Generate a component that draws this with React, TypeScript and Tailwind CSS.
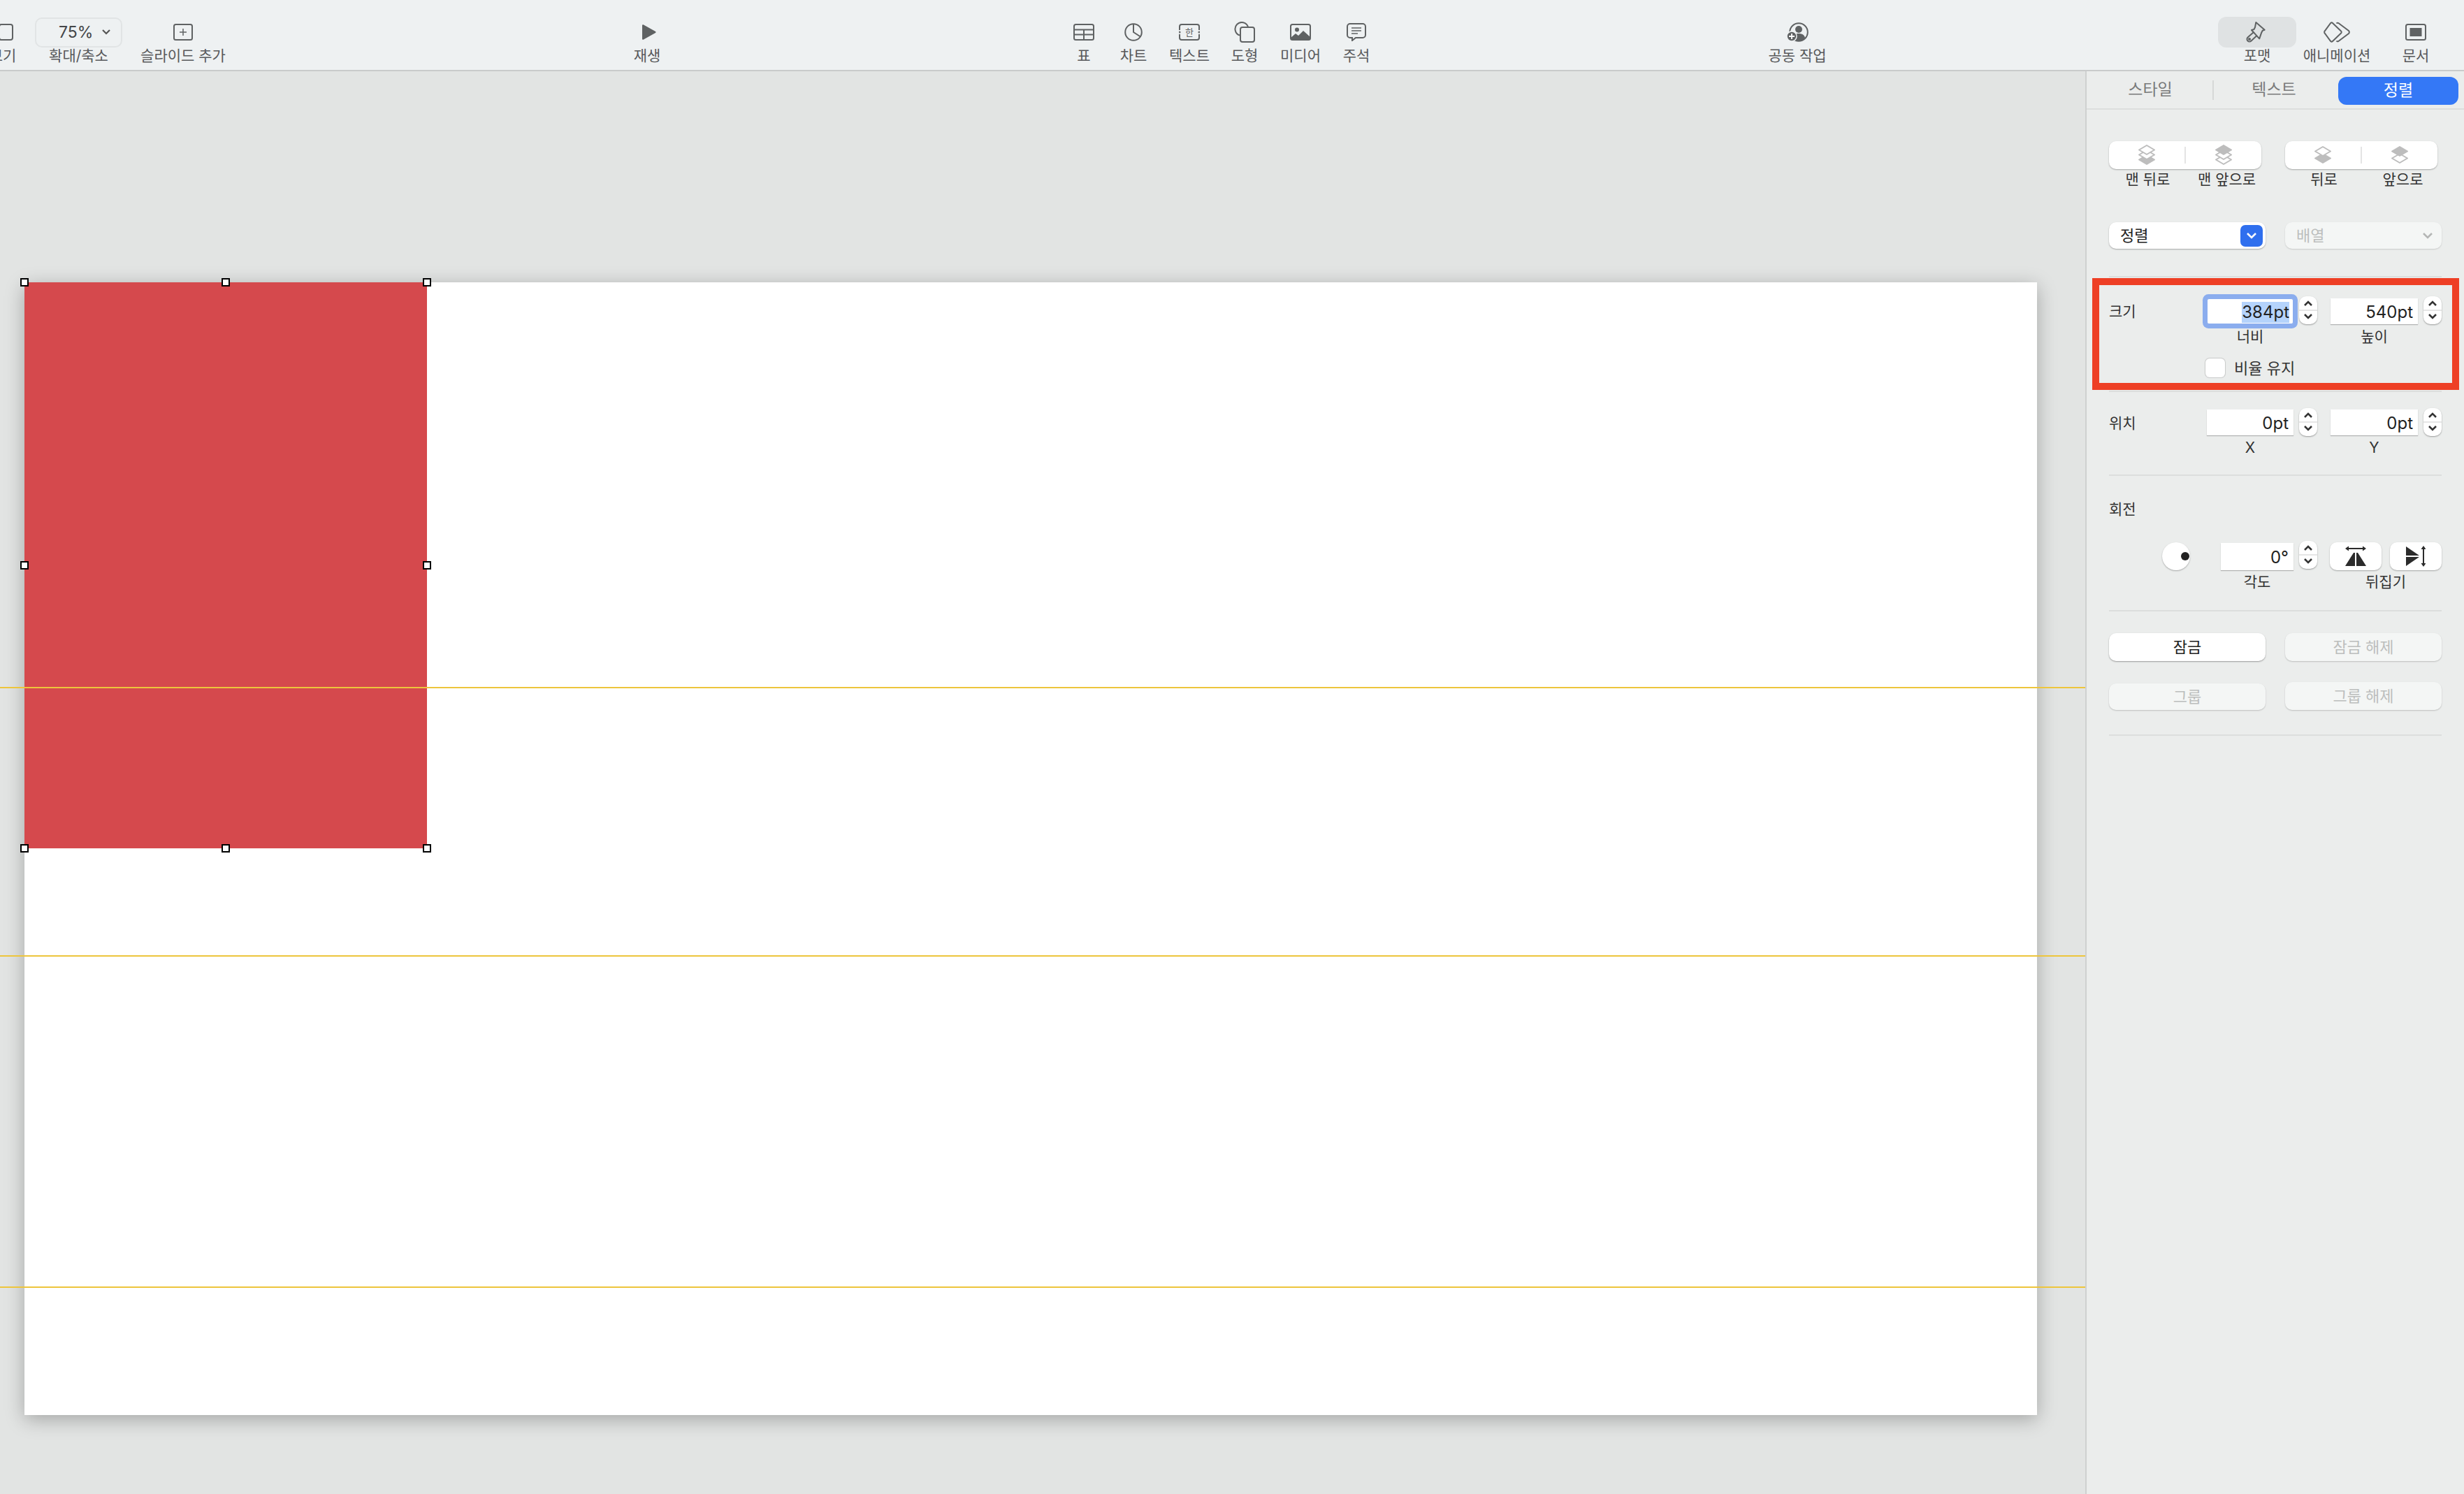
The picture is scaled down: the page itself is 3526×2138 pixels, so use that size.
import React from 'react'

const iconStroke = '#5f6263'

function ToolItem({
  label,
  className,
  active,
  children,
}: {
  label: string
  className: string
  active?: boolean
  children: React.ReactNode
}) {
  return (
    <div className={`flex shrink-0 flex-col items-center ${className}`}>
      <div className={`flex h-[44px] w-full items-center justify-center rounded-[12px] ${active ? 'bg-[#dfe2e3]' : ''}`}>
        {children}
      </div>
      <span className="whitespace-nowrap text-[21px] leading-[24px] text-[#58595b]">{label}</span>
    </div>
  )
}

function Svg({ w, h, children }: { w: number; h: number; children: React.ReactNode }) {
  return (
    <svg width={w} height={h} viewBox={`0 0 ${w} ${h}`} fill="none" stroke={iconStroke} strokeWidth={2}>
      {children}
    </svg>
  )
}

function Toolbar() {
  return (
    <div className="flex h-[102px] shrink-0 items-start border-b-2 border-[#c9cbcb] bg-[#eef1f2] pt-[24px]">
      <ToolItem label="보기" className="ml-[-26px] w-[60px]">
        <Svg w={30} h={24}>
          <rect x="10" y="1" width="19" height="22" rx="3" />
        </Svg>
      </ToolItem>
      <ToolItem label="확대/축소" className="ml-[16px] w-[125px]">
        <div className="flex h-[43px] w-full items-center rounded-[10px] border-2 border-[#e1e4e5] pl-[32px] pr-[12px]">
          <span className="text-[23px] leading-none text-[#444648]">75%</span>
          <svg className="ml-[12px]" width="14" height="10" viewBox="0 0 14 10" fill="none" stroke="#555" strokeWidth="2.2">
            <path d="M2 2l5 5 5-5" />
          </svg>
        </div>
      </ToolItem>
      <ToolItem label="슬라이드 추가" className="ml-[22px] w-[130px]">
        <Svg w={28} h={24}>
          <rect x="1" y="1" width="26" height="22" rx="2.5" />
          <path d="M14 7v10M9 12h10" strokeWidth={1.5} />
        </Svg>
      </ToolItem>
      <ToolItem label="재생" className="ml-[569px] w-[60px]">
        <svg className="ml-[6px]" width="20" height="22" viewBox="0 0 20 22" fill={iconStroke}>
          <path d="M0 1.5C0 .5 1 0 2 .6l17 9.4c.8.5.8 1.6 0 2L2 21.4c-1 .6-2 0-2-1z" />
        </svg>
      </ToolItem>
      <ToolItem label="표" className="ml-[565px] w-[60px]">
        <Svg w={30} h={24}>
          <rect x="1" y="1" width="28" height="22" rx="2.5" />
          <path d="M1 8.5h28M1 15.5h28M15 8.5v14.5" />
        </Svg>
      </ToolItem>
      <ToolItem label="차트" className="ml-[11px] w-[60px]">
        <Svg w={26} h={26}>
          <circle cx="13" cy="13" r="11.8" />
          <path d="M13 1.5V13l10 6.5" />
        </Svg>
      </ToolItem>
      <ToolItem label="텍스트" className="ml-[15px] w-[70px]">
        <div className="relative flex h-[24px] w-[30px] items-center justify-center">
          <svg className="absolute inset-0" width="30" height="24" viewBox="0 0 30 24" fill="none" stroke={iconStroke} strokeWidth="2">
            <path d="M1 9V4a3 3 0 0 1 3-3h22a3 3 0 0 1 3 3v5M1 15v5a3 3 0 0 0 3 3h22a3 3 0 0 0 3-3v-5" />
            <circle cx="1" cy="12" r=".6" />
            <circle cx="29" cy="12" r=".6" />
          </svg>
          <span className="text-[13px] leading-none text-[#5f6263]">한</span>
        </div>
      </ToolItem>
      <ToolItem label="도형" className="ml-[14px] w-[60px]">
        <Svg w={30} h={30}>
          <path d="M8 19.5A9.5 9.5 0 1 1 20 7.5" />
          <rect x="9" y="8" width="20" height="21" rx="3" />
        </Svg>
      </ToolItem>
      <ToolItem label="미디어" className="ml-[20px] w-[60px]">
        <Svg w={30} h={24}>
          <rect x="1" y="1" width="28" height="22" rx="2.5" />
          <circle cx="10" cy="8.5" r="3" fill={iconStroke} stroke="none" />
          <path d="M1 20l7-6 4 3 7-7 10 9v2a2 2 0 0 1-2 2H3a2 2 0 0 1-2-2z" fill={iconStroke} stroke="none" />
        </Svg>
      </ToolItem>
      <ToolItem label="주석" className="ml-[20px] w-[60px]">
        <Svg w={28} h={26}>
          <path d="M5 1h18a4 4 0 0 1 4 4v12a4 4 0 0 1-4 4H13l-5 4v-4H5a4 4 0 0 1-4-4V5a4 4 0 0 1 4-4z" />
          <path d="M7 7h14M7 11h14M7 15h9" strokeWidth={1.5} />
        </Svg>
      </ToolItem>
      <ToolItem label="공동 작업" className="ml-[551px] w-[100px]">
        <svg width="32" height="28" viewBox="0 0 32 28" fill="none" stroke={iconStroke} strokeWidth="2">
          <circle cx="18" cy="14" r="12.8" />
          <circle cx="18" cy="10" r="5" fill={iconStroke} stroke="none" />
          <path d="M9 23c1-5 4-7 9-7s8 2 9 6c-2 3-5 5-9 5s-7-1-9-4z" fill={iconStroke} stroke="none" />
          <circle cx="8" cy="20" r="7" fill={iconStroke} stroke="#eef1f2" strokeWidth="1.5" />
          <path d="M8 16v8M4 20h8" stroke="#fff" strokeWidth="1.8" />
        </svg>
      </ToolItem>
      <ToolItem label="포맷" className="ml-[552px] w-[112px]" active>
        <svg className="mr-[4px]" width="30" height="32" viewBox="0 0 30 32" fill="none" stroke={iconStroke} strokeWidth="2" strokeLinejoin="round">
          <path d="M15.300 2l12.400 10.700-3 1-1.500 3-3 8.600L9 13l3.500-1 1.500-3z" />
          <path d="M12 16l-8.500 7.500a3.500 3.500 0 1 0 5 5L16.500 21" />
          <circle cx="6" cy="26" r="1" />
        </svg>
      </ToolItem>
      <ToolItem label="애니메이션" className="ml-[8px] w-[100px]">
        <Svg w={38} h={30}>
          <path d="M13 2l12 11.5a2 2 0 0 1 0 3L13 28a2 2 0 0 1-2.8 0L2 17a2.8 2.8 0 0 1 0-4L10.200 2a2 2 0 0 1 2.800 0z" />
          <path d="M18.500 2.500a2 2 0 0 1 2.800-.5L36 13a2.800 2.800 0 0 1 0 4L21.300 28a2 2 0 0 1-2.800-.5" />
        </Svg>
      </ToolItem>
      <ToolItem label="문서" className="ml-[33px] w-[60px]">
        <Svg w={30} h={24}>
          <rect x="1" y="1" width="28" height="22" rx="2.5" />
          <rect x="6.500" y="6" width="17" height="12" fill={iconStroke} stroke="none" />
        </Svg>
      </ToolItem>
    </div>
  )
}

const handles = [
  'left-[-6px] top-[-6px]',
  'left-[282px] top-[-6px]',
  'left-[570px] top-[-6px]',
  'left-[-6px] top-[399px]',
  'left-[570px] top-[399px]',
  'left-[-6px] top-[804px]',
  'left-[282px] top-[804px]',
  'left-[570px] top-[804px]',
]

function Canvas() {
  return (
    <div className="relative min-w-0 flex-1 overflow-hidden bg-[#e2e4e3] pl-[35px] pt-[302px]">
      <div className="relative h-[1621px] w-[2880px] bg-white shadow-[0_6px_26px_rgba(0,0,0,0.28)]">
        <div className="relative h-[810px] w-[576px] bg-[#d5494d]">
          {handles.map((pos) => (
            <div key={pos} className={`absolute z-20 h-[12px] w-[12px] border-2 border-black bg-white ${pos}`} />
          ))}
        </div>
      </div>
      <div className="absolute left-0 right-0 top-[881px] z-10 h-[2px] bg-[#edc53c]" />
      <div className="absolute left-0 right-0 top-[1265px] z-10 h-[2px] bg-[#edc53c]" />
      <div className="absolute left-0 right-0 top-[1739px] z-10 h-[2px] bg-[#edc53c]" />
    </div>
  )
}

function Divider({ className }: { className: string }) {
  return <div className={`h-[2px] bg-[#dcdedd] ${className}`} />
}

function Stepper() {
  return (
    <div className="flex h-[40px] w-[26px] shrink-0 flex-col items-center justify-center rounded-[10px] bg-white shadow-[0_1px_2px_rgba(0,0,0,0.35)]">
      <svg width="14" height="20" viewBox="0 0 14 20" fill="none" stroke="#333" strokeWidth="2.6">
        <path d="M2 13l5-5 5 5" />
      </svg>
      <div className="my-[-1px] h-[2px] w-full bg-[#e6e6e6]" />
      <svg width="14" height="20" viewBox="0 0 14 20" fill="none" stroke="#333" strokeWidth="2.6">
        <path d="M2 6l5 5 5-5" />
      </svg>
    </div>
  )
}

function Field({ value, className }: { value: string; className: string }) {
  return (
    <div className={`flex h-[37px] shrink-0 items-center justify-end bg-white pr-[7px] pt-[2px] text-[24px] leading-none text-[#222] shadow-[0_1px_1px_rgba(0,0,0,0.25)] ${className}`}>
      {value}
    </div>
  )
}

function Caption({ children, className }: { children: React.ReactNode; className: string }) {
  return <div className={`text-center text-[21px] leading-[24px] text-[#333] ${className}`}>{children}</div>
}

const layerGrey = '#bdbdbd'

function Diamond({ y, filled }: { y: number; filled: boolean }) {
  return (
    <path
      d={`M13 ${y}l11 6.500-11 6.500-11-6.500z`}
      fill={filled ? layerGrey : '#fff'}
      stroke={layerGrey}
      strokeWidth="2"
      strokeLinejoin="round"
    />
  )
}

function Layers({ rows }: { rows: { y: number; filled: boolean }[] }) {
  return (
    <svg width="26" height="30" viewBox="0 0 26 30">
      {rows.map((r) => (
        <Diamond key={r.y} y={r.y} filled={r.filled} />
      ))}
    </svg>
  )
}

function Segment({
  left,
  right,
  leftLabel,
  rightLabel,
}: {
  left: React.ReactNode
  right: React.ReactNode
  leftLabel: string
  rightLabel: string
}) {
  return (
    <div className="w-[218px]">
      <div className="flex h-[40px] items-center rounded-[10px] bg-white shadow-[0_1px_2px_rgba(0,0,0,0.3)]">
        <div className="flex flex-1 justify-center">{left}</div>
        <div className="h-[24px] w-[2px] bg-[#e4e4e4]" />
        <div className="flex flex-1 justify-center">{right}</div>
      </div>
      <div className="mt-[3px] grid grid-cols-2 text-[21px] leading-[24px] text-[#333]">
        <span className="whitespace-nowrap pl-[2px] text-center">{leftLabel}</span>
        <span className="whitespace-nowrap pl-[10px] text-center">{rightLabel}</span>
      </div>
    </div>
  )
}

function Button({ label, disabled, className }: { label: string; disabled?: boolean; className?: string }) {
  return (
    <div
      className={`flex w-[224px] items-center justify-center rounded-[10px] text-[22px] leading-none ${
        disabled ? 'bg-[#f4f6f5] text-[#bcbebd] shadow-[0_1px_2px_rgba(0,0,0,0.2)]' : 'bg-white text-[#222] shadow-[0_1px_2px_rgba(0,0,0,0.35)]'
      } ${className ?? ''}`}
    >
      {label}
    </div>
  )
}

function Panel() {
  return (
    <div className="relative w-[542px] shrink-0 border-l-2 border-[#cfd1d0] bg-[#ebedec]">
      <div className="flex h-[55px] items-center border-b-2 border-[#dcdedd] text-[23px] leading-none text-[#7a7b7b]">
        <span className="w-[180px] pl-[2px] text-center">스타일</span>
        <div className="h-[28px] w-[2px] bg-[#d6d8d7]" />
        <span className="w-[176px] pr-[4px] text-center">텍스트</span>
        <span className="ml-[2px] mt-[2px] flex h-[40px] w-[172px] items-center justify-center rounded-[12px] bg-[#3478f6] text-white">
          정렬
        </span>
      </div>

      <div className="px-[32px]">
        <div className="mt-[45px] flex gap-[34px]">
          <Segment
            leftLabel="맨 뒤로"
            rightLabel="맨 앞으로"
            left={<Layers rows={[{ y: 15, filled: true }, { y: 8, filled: false }, { y: 1, filled: false }]} />}
            right={<Layers rows={[{ y: 15, filled: false }, { y: 8, filled: false }, { y: 1, filled: true }]} />}
          />
          <Segment
            leftLabel="뒤로"
            rightLabel="앞으로"
            left={<Layers rows={[{ y: 13, filled: true }, { y: 3, filled: false }]} />}
            right={<Layers rows={[{ y: 13, filled: false }, { y: 3, filled: true }]} />}
          />
        </div>

        <div className="mt-[49px] flex gap-[28px]">
          <div className="flex h-[38px] w-[224px] items-center justify-between rounded-[10px] bg-white pl-[16px] pr-[4px] text-[22px] leading-none text-[#222] shadow-[0_1px_2px_rgba(0,0,0,0.3)]">
            정렬
            <span className="flex h-[31px] w-[32px] items-center justify-center rounded-[7px] bg-[#2f6fee]">
              <svg width="16" height="10" viewBox="0 0 16 10" fill="none" stroke="#fff" strokeWidth="2.6">
                <path d="M2 2l6 6 6-6" />
              </svg>
            </span>
          </div>
          <div className="flex h-[38px] w-[224px] items-center justify-between rounded-[10px] bg-[#f4f6f5] pl-[16px] pr-[12px] text-[22px] leading-none text-[#bcbebd] shadow-[0_1px_2px_rgba(0,0,0,0.15)]">
            배열
            <svg width="16" height="10" viewBox="0 0 16 10" fill="none" stroke="#b4b6b5" strokeWidth="2.6">
              <path d="M2 2l6 6 6-6" />
            </svg>
          </div>
        </div>

        <Divider className="mt-[39px]" />

        <div className="mt-[27px] flex h-[40px] items-start">
          <span className="w-[140px] pt-[10px] text-[21px] leading-[24px] text-[#333]">크기</span>
          <div className="mt-[3px] flex h-[37px] w-[124px] shrink-0 items-center justify-end rounded-[3px] border border-[#8badee] bg-white pr-[5px] pt-[2px] text-[24px] leading-none text-[#222] ring-[6px] ring-[#8badee]">
            <span className="bg-[#b5d3fb] py-[3px]">384pt</span>
          </div>
          <div className="ml-[8px]"><Stepper /></div>
          <Field value="540pt" className="ml-[19px] mt-[3px] w-[125px]" />
          <div className="ml-[8px]"><Stepper /></div>
        </div>
        <div className="mt-[6px] flex pl-[140px]">
          <Caption className="w-[124px]">너비</Caption>
          <Caption className="ml-[53px] w-[125px]">높이</Caption>
        </div>
        <div className="ml-[138px] mt-[19px] flex h-[27px] items-center">
          <div className="h-[27px] w-[28px] rounded-[6px] bg-white shadow-[0_0_1px_1px_rgba(0,0,0,0.15)]" />
          <span className="ml-[13px] text-[22px] leading-none text-[#333]">비율 유지</span>
        </div>

        <Divider className="mt-[19px]" />

        <div className="mt-[23px] flex h-[40px] items-start">
          <span className="w-[140px] pt-[10px] text-[21px] leading-[24px] text-[#333]">위치</span>
          <Field value="0pt" className="mt-[2px] w-[124px]" />
          <div className="ml-[8px]"><Stepper /></div>
          <Field value="0pt" className="ml-[19px] mt-[2px] w-[125px]" />
          <div className="ml-[8px]"><Stepper /></div>
        </div>
        <div className="mt-[5px] flex pl-[140px]">
          <Caption className="w-[124px]">X</Caption>
          <Caption className="ml-[53px] w-[125px]">Y</Caption>
        </div>

        <Divider className="mt-[26px]" />

        <div className="mt-[36px] text-[21px] leading-[24px] text-[#333]">회전</div>
        <div className="mt-[33px] flex items-start">
          <div className="ml-[76px] mt-[2px] flex h-[40px] w-[40px] shrink-0 items-center justify-end rounded-full bg-white pr-[1px] shadow-[0_1px_2px_rgba(0,0,0,0.3)]">
            <div className="h-[12px] w-[12px] rounded-full bg-[#222]" />
          </div>
          <Field value="0°" className="ml-[44px] mt-[3px] h-[39px] w-[104px]" />
          <div className="ml-[8px]"><Stepper /></div>
          <div className="ml-[18px] mt-[2px] flex h-[40px] w-[74px] shrink-0 items-center justify-center rounded-[10px] bg-white shadow-[0_1px_2px_rgba(0,0,0,0.3)]">
            <svg width="32" height="30" viewBox="0 0 32 30" fill="#2b2b2b" stroke="#2b2b2b">
              <path d="M3 4h26" strokeWidth="2" />
              <path d="M1 4l5-3.500v7zM31 4l-5-3.500v7z" stroke="none" />
              <path d="M13 10h2v19H1zM17 10h2l12 19H17z" stroke="none" />
            </svg>
          </div>
          <div className="ml-[12px] mt-[2px] flex h-[40px] w-[74px] shrink-0 items-center justify-center rounded-[10px] bg-white shadow-[0_1px_2px_rgba(0,0,0,0.3)]">
            <svg width="28" height="30" viewBox="0 0 28 30" fill="#2b2b2b" stroke="#2b2b2b">
              <path d="M0 1l19 13H0zM0 16h19L0 29z" stroke="none" />
              <path d="M25 3v24" strokeWidth="2" />
              <path d="M25 0l-3.500 5h7zM25 30l-3.500-5h7z" stroke="none" />
            </svg>
          </div>
        </div>
        <div className="mt-[5px] flex">
          <Caption className="ml-[160px] w-[104px]">각도</Caption>
          <Caption className="ml-[52px] w-[160px]">뒤집기</Caption>
        </div>

        <Divider className="mt-[28px]" />

        <div className="mt-[31px] flex h-[40px] gap-[28px]">
          <Button label="잠금" />
          <Button label="잠금 해제" disabled />
        </div>
        <div className="mt-[30px] flex h-[40px] gap-[28px]">
          <Button label="그룹" disabled className="mt-[2px]" />
          <Button label="그룹 해제" disabled />
        </div>

        <Divider className="mt-[35px]" />
      </div>

      {/* annotation box drawn over the size controls */}
      <div className="pointer-events-none absolute left-[8px] top-[296px] h-[160px] w-[525px] border-[10px] border-[#ee3f25]" />
    </div>
  )
}

export default function App() {
  return (
    <div className="flex h-[2138px] w-[3526px] flex-col overflow-hidden font-['Inter','Noto_Sans_CJK_KR',sans-serif]">
      <Toolbar />
      <div className="flex min-h-0 flex-1">
        <Canvas />
        <Panel />
      </div>
    </div>
  )
}
